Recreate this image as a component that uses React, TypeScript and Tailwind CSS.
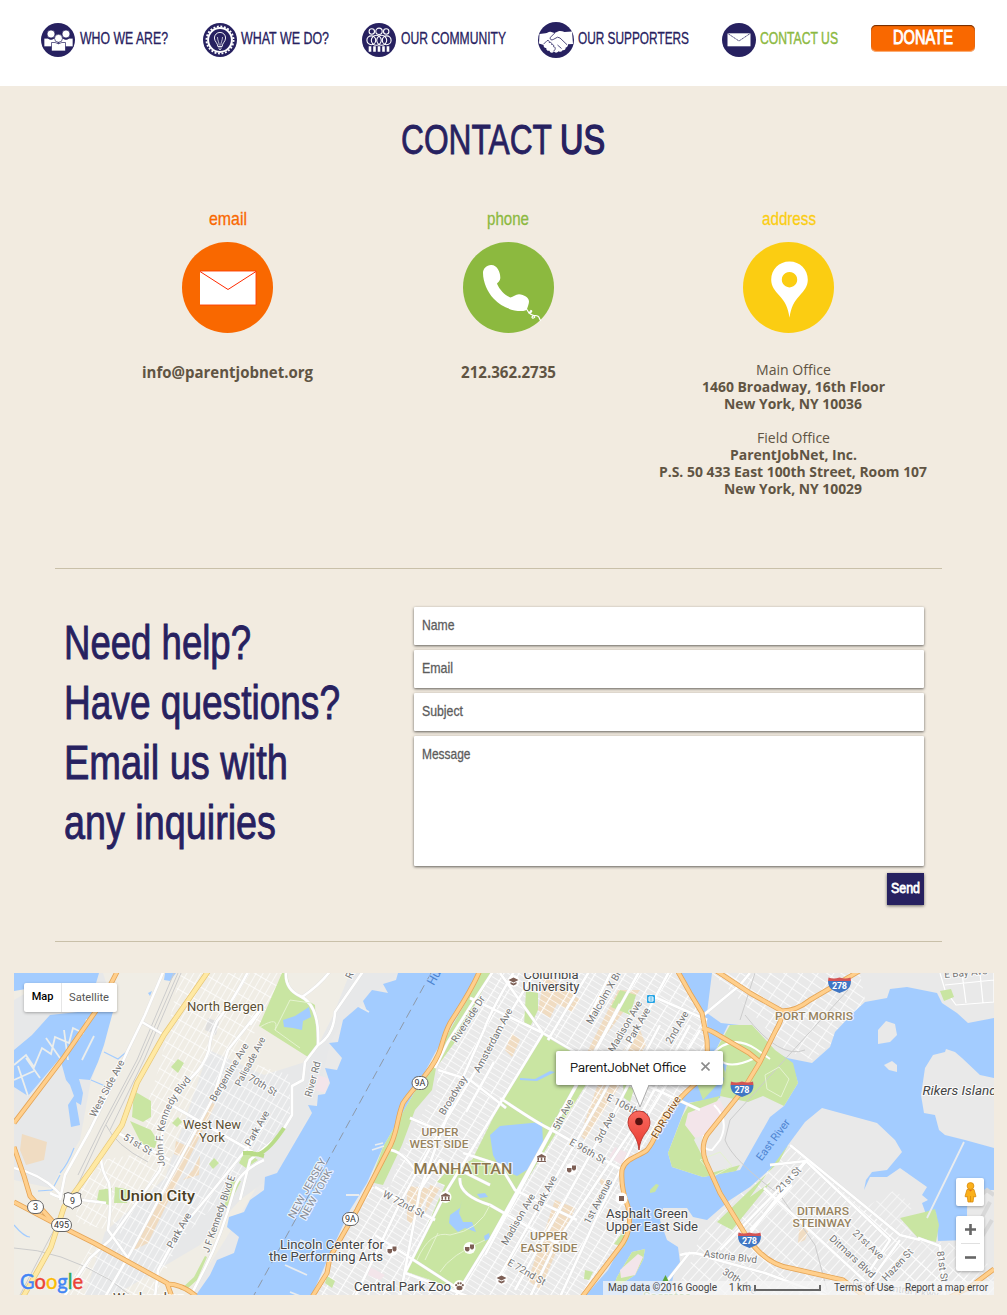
import { useLayoutEffect, useRef, useState } from "react";
import type { ReactNode } from "react";

/** Sets a line of text to an exact width by scaling it horizontally. */
function Fit({ w, className = "", children }: { w: number; className?: string; children: ReactNode }) {
  const ref = useRef<HTMLSpanElement>(null);
  const [k, setK] = useState(1);
  useLayoutEffect(() => {
    if (ref.current && ref.current.offsetWidth) {
      const prev = ref.current.style.transform;
      ref.current.style.transform = "none";
      const natural = ref.current.getBoundingClientRect().width;
      ref.current.style.transform = prev;
      setK(w / natural);
    }
  }, [w]);
  return (
    <span className="block" style={{ width: w }}>
      <span ref={ref} className={"block w-max origin-left whitespace-nowrap " + className} style={{ transform: `scaleX(${k})` }}>
        {children}
      </span>
    </span>
  );
}

const NAVY = "#272160";

function PeopleIcon() {
  const person = (x: number, y: number) => (
    <g fill="#fff" stroke={NAVY} strokeWidth=".7">
      <path d={`M${x - 7} ${y + 4.2}h3.6q3.4 2.6 6.800 0h3.600v8.500h-14z`} />
      <circle cx={x} cy={y} r="4" />
    </g>
  );
  return (
    <svg className="block size-[34px]" viewBox="0 0 34 34">
      <circle cx="17" cy="17" r="17" fill={NAVY} />
      {person(10, 11)}
      {person(25, 11)}
      {person(17.500, 15.300)}
    </svg>
  );
}

function BulbIcon() {
  return (
    <svg className="block size-[34px]" viewBox="0 0 34 34" fill="none">
      <circle cx="17" cy="17" r="17" fill={NAVY} />
      <circle cx="17" cy="17" r="11.900" stroke="#fff" strokeWidth="2" />
      <circle cx="17" cy="17" r="13.500" stroke="#fff" strokeWidth="1.900" strokeDasharray="1.9 1.634" />
      <path d="M14.800 23.500c0-3.500-3.400-5-3.400-8.500a5.600 5.600 0 0 1 11.200 0c0 3.500-3.400 5-3.400 8.500z" stroke="#fff" strokeWidth=".9" />
      <path d="M16.200 22.500c0-3-1.700-5-1.700-8.500M17.800 22.500c0-3 1.700-5 1.700-8.500M15 25h4M16 26.500h2" stroke="#fff" strokeWidth=".7" />
    </svg>
  );
}

function CommunityIcon() {
  return (
    <svg className="block size-[34px]" viewBox="0 0 34 34" fill="none" stroke="#fff" strokeWidth="1.100">
      <circle cx="17" cy="17" r="17" fill={NAVY} stroke="none" />
      <circle cx="9.800" cy="8.500" r="2.700" />
      <circle cx="17" cy="8.300" r="3.200" />
      <circle cx="24.200" cy="8.500" r="2.700" />
      <circle cx="9.300" cy="17.300" r="4.400" />
      <circle cx="14.300" cy="17.300" r="5" />
      <circle cx="19.700" cy="17.300" r="5" />
      <circle cx="24.700" cy="17.300" r="4.400" />
      <path d="M8 23.300v5.400M12.500 23.300v5.400M17 23.300v5.400M21.500 23.300v5.400M26 23.300v5.400" strokeWidth="2.600" />
    </svg>
  );
}

function HandshakeIcon() {
  return (
    <svg className="block size-[36px]" viewBox="0 0 36 36">
      <circle cx="18" cy="18" r="18" fill={NAVY} />
      <path
        d="M1.500 12l6-.8c2-.2 3-1.800 5-1.500l4 1.300 4-1.700c2-.7 4 .2 6 .8l7.500-.600 1 12.500-5 .2c0 2-.8 3-2.300 3.200 0 1.800-1 3-3 2.700-.5 1.800-2.500 2.200-4 1.100-1.500 1.700-3.500 2-4.700.3-1.500 1.800-4 1.500-4.500-.7-2.300.4-3.500-1-3.200-2.800-2 .2-3-1.500-2.700-3l-4.600-1.500z"
        fill="#fff"
      />
      <path
        d="M17 10.800l-4.800 4.700c-.6 2.300 1.600 3 3 2l4.300-2.300 2.500.8 7 6.700M5.500 22.200l3.500-3.500c1.500-.8 2.800.5 2.200 1.800 1.700-.6 3 .6 2.400 2 1.800-.2 2.600 1 2 2.300 1.400 0 2 1.200 1.400 2.700l-1.500 1.800M19.500 23l4 3.500"
        fill="none"
        stroke={NAVY}
        strokeWidth=".8"
      />
    </svg>
  );
}

function MailIcon() {
  return (
    <svg className="block size-[34px]" viewBox="0 0 34 34">
      <circle cx="17" cy="17" r="17" fill={NAVY} />
      <rect x="5.500" y="10.300" width="23" height="13" fill="#fff" />
      <path d="M5.500 10.300L17 18l11.500-7.700" fill="none" stroke={NAVY} strokeWidth=".8" strokeDasharray="1.500 .4" />
    </svg>
  );
}

const NAV = [
  { label: "WHO WE ARE?", w: 88, gap: "gap-[5px]", ml: "ml-[41px]", icon: <PeopleIcon /> },
  { label: "WHAT WE DO?", w: 88, gap: "gap-[4px]", ml: "ml-[35px]", icon: <BulbIcon /> },
  { label: "OUR COMMUNITY", w: 105, gap: "gap-[5px]", ml: "ml-[33px]", icon: <CommunityIcon /> },
  { label: "OUR SUPPORTERS", w: 111, gap: "gap-[4px]", ml: "ml-[32px]", icon: <HandshakeIcon /> },
  { label: "CONTACT US", w: 78, gap: "gap-[4px]", ml: "ml-[33px]", icon: <MailIcon />, active: true },
];

function Nav() {
  return (
    <header className="flex h-[86px] bg-white">
      {NAV.map((n) => (
        <a key={n.label} className={"flex h-[80px] items-center " + n.gap + " " + n.ml}>
          {n.icon}
          <Fit
            w={n.w}
            className={
              "mt-[-3px] text-[16px] leading-4 " +
              (n.active ? "text-[#8cb941] [-webkit-text-stroke:0.4px_#8cb941]" : "text-[#272160] [-webkit-text-stroke:0.3px_#272160]")
            }
          >
            {n.label}
          </Fit>
        </a>
      ))}
      <a className="mt-[25px] ml-[33px] flex h-[27px] w-[104px] justify-center rounded-[5px] bg-[#f96800] pt-[2px] shadow-[inset_0_1px_1px_rgba(60,20,0,0.75),inset_0_-1px_1px_rgba(255,255,255,0.5)]">
        <Fit w={60} className="text-[19.5px] leading-[20px] text-white [-webkit-text-stroke:0.9px_white]">
          DONATE
        </Fit>
      </a>
    </header>
  );
}

function EnvelopeBadge() {
  return (
    <svg className="block size-[91px]" viewBox="0 0 91 91">
      <circle cx="45.500" cy="45.500" r="45.500" fill="#f96800" />
      <rect x="18" y="29" width="56" height="34" fill="#fff" />
      <path d="M18 29h56v34H18" fill="none" stroke="#ff3c00" strokeWidth=".9" />
      <path d="M18 29.500L46 47.500 74 29.500" fill="none" stroke="#ff2a00" strokeWidth="1" />
    </svg>
  );
}

function PhoneBadge() {
  return (
    <svg className="block size-[91px]" viewBox="0 0 91 91">
      <circle cx="45.500" cy="45.500" r="45.500" fill="#8cb93f" />
      <path
        d="M28 23c-4.500.2-8 3.500-8 8 0 9 4.500 19 10.500 25.500 7.500 8 18 12.500 27.500 12.500 3.500 0 5.500-.5 6-2 .7-2 2-5.500 2-7.500 0-4-5-7-10-7.300-3.500 0-5.800 2.700-8.500 3.300-6-2.500-11-8-13.500-13.800 1.200-1.700 3.300-2.700 3.300-6.200C37.300 30 34 22.700 28 23z"
        fill="#fff"
      />
      <path d="M63.500 67l2.500 4 2-2.500c1.500.3.500 2-1.500 2.700 1.500 2 4 1.500 5 2.800 1.500 2-3 3-2.500 1 .5-1.500 4-2 6-.8 2 1.500 1 3 3 4.500" fill="none" stroke="#fff" strokeWidth="1.200" />
    </svg>
  );
}

function PinBadge() {
  return (
    <svg className="block size-[91px]" viewBox="0 0 91 91">
      <circle cx="45.500" cy="45.500" r="45.500" fill="#fbcd12" />
      <path
        fillRule="evenodd"
        d="M46.500 19.500c10.500 0 18.300 8 18.300 18.200 0 6.500-3.500 10.600-8.300 16-5.500 6-8.500 11.500-10 22-1.500-10.500-4.500-16-10-22-4.800-5.400-8.300-9.500-8.300-16 0-10.200 7.800-18.200 18.300-18.200zM46.500 30a7.700 7.700 0 1 0 .01 0z"
        fill="#fff"
      />
    </svg>
  );
}

const ADDRESS: [string, number, boolean][] = [
  ["Main Office", 75, false],
  ["1460 Broadway, 16th Floor", 183, true],
  ["New York, NY 10036", 138, true],
  ["", 0, false],
  ["Field Office", 73, false],
  ["ParentJobNet, Inc.", 127, true],
  ["P.S. 50 433 East 100th Street, Room 107", 268, true],
  ["New York, NY 10029", 138, true],
];

function Contacts() {
  const bold = "text-[15.5px] leading-5 font-bold font-['Open_Sans',sans-serif]";
  return (
    <section className="ml-[87px] flex h-[361px] text-[#605443]">
      <div className="flex w-[281px] flex-col items-center">
        <Fit w={38} className="text-[19px] leading-[23px] text-[#f96800] [-webkit-text-stroke:0.3px_#f96800]">email</Fit>
        <div className="mt-[12px]"><EnvelopeBadge /></div>
        <div className="mt-[29px]"><Fit w={171} className={bold}>info@parentjobnet.org</Fit></div>
      </div>
      <div className="flex w-[280px] flex-col items-center">
        <Fit w={42} className="text-[19px] leading-[23px] text-[#8cb93f] [-webkit-text-stroke:0.3px_#8cb93f]">phone</Fit>
        <div className="mt-[12px]"><PhoneBadge /></div>
        <div className="mt-[29px]"><Fit w={95} className={bold}>212.362.2735</Fit></div>
      </div>
      <div className="flex w-[290px] flex-col items-center">
        <div className="flex flex-col items-center pr-[9px]">
          <Fit w={54} className="text-[19px] leading-[23px] text-[#fbcd12] [-webkit-text-stroke:0.3px_#fbcd12]">address</Fit>
          <div className="mt-[12px]"><PinBadge /></div>
        </div>
        <div className="mt-[28px] flex flex-col items-center font-['Open_Sans',sans-serif] text-[14px]">
          {ADDRESS.map(([t, w, b], i) =>
            t ? (
              <div key={i} className="h-[17px]">
                <Fit w={w} className={"leading-[17px] " + (b ? "font-bold" : "")}>{t}</Fit>
              </div>
            ) : (
              <div key={i} className="h-[17px]" />
            ),
          )}
        </div>
      </div>
    </section>
  );
}

function Field({ label, w, tall = false }: { label: string; w: number; tall?: boolean }) {
  return (
    <div className={"rounded-[1px] bg-white pt-[9px] pl-[7.5px] shadow-[0_1px_3px_rgba(0,0,0,0.6)] " + (tall ? "h-[130px]" : "h-[38px]")}>
      <Fit w={w} className="text-[15px] leading-[18px] text-[#5c5c5c] [-webkit-text-stroke:0.3px_#5c5c5c]">{label}</Fit>
    </div>
  );
}

function Inquiry() {
  return (
    <section className="ml-[55px] flex h-[374px] w-[887px] border-y border-[#c9c0a9]">
      <div className="mt-[44px] ml-[9px] w-[350px] text-[47.5px] leading-[60px] text-[#272160]">
        {([["Need help?", 187], ["Have questions?", 276], ["Email us with", 224], ["any inquiries", 212]] as [string, number][]).map(([t, w]) => (
          <div key={t} className="h-[60px]">
            <Fit w={w} className="[-webkit-text-stroke:0.9px_#272160]">{t}</Fit>
          </div>
        ))}
      </div>
      <form className="mt-[38px] flex w-[510px] flex-col gap-[5px]">
        <Field label="Name" w={32.5} />
        <Field label="Email" w={31} />
        <Field label="Subject" w={41} />
        <Field label="Message" w={48.5} tall />
        <button type="button" className="mt-[2px] flex h-[32px] w-[37px] items-start justify-center self-end bg-[#272160] pt-[6px] shadow-[0_1px_3px_rgba(0,0,0,0.55)]">
          <Fit w={29} className="text-[15px] leading-[18px] text-white [-webkit-text-stroke:0.8px_white]">Send</Fit>
        </button>
      </form>
    </section>
  );
}

type LabelSpec = { t: string; x: number; y: number; r?: number; s?: number; c?: string; wt?: number; w?: number; i?: boolean; a?: "start" | "middle" };

const LABELS: LabelSpec[] = [
  { t: "North Bergen", x: 225.500, y: 1011, s: 13, w: 77, c: "#5c5035" },
  { t: "West New", x: 212, y: 1129, s: 12.800, w: 58, c: "#5c5035" },
  { t: "York", x: 212, y: 1142, s: 12.800, w: 26, c: "#5c5035" },
  { t: "Union City", x: 157.500, y: 1201, s: 14.500, w: 75, c: "#4b3f24", wt: 500 },
  { t: "Weehawken", x: 149, y: 1302, s: 12.500, w: 72, c: "#5c5035" },
  { t: "West Side Ave", x: 110, y: 1090, r: -62 },
  { t: "Bergenline Ave", x: 232, y: 1074, r: -59 },
  { t: "Palisade Ave", x: 253, y: 1063, r: -62, s: 9.500 },
  { t: "70th St", x: 261, y: 1088, r: 31 },
  { t: "51st St", x: 136, y: 1147, r: 31 },
  { t: "Park Ave", x: 260, y: 1130, r: -60 },
  { t: "Park Ave", x: 182, y: 1232, r: -60 },
  { t: "River Rd", x: 316, y: 1080, r: -75 },
  { t: "River Rd", x: 359, y: 963, r: -65 },
  { t: "J F Kennedy Blvd E", x: 222, y: 1215, r: -71, w: 81 },
  { t: "NEW JERSEY", x: 310, y: 1190, r: -61, c: "#8b8f98", w: 67 },
  { t: "NEW YORK", x: 319, y: 1196, r: -61, c: "#8b8f98", w: 56 },
  { t: "Hudson River", x: 451, y: 955, r: -61, s: 12, c: "#4c83d0" },
  { t: "Riverside Dr", x: 471, y: 1021, r: -57 },
  { t: "Amsterdam Ave", x: 496, y: 1042, r: -62 },
  { t: "Broadway", x: 456, y: 1097, r: -58 },
  { t: "UPPER", x: 440, y: 1136, s: 11.500, w: 37, c: "#97835f", wt: 500 },
  { t: "WEST SIDE", x: 439, y: 1148, s: 11.500, w: 59, c: "#97835f", wt: 500 },
  { t: "MANHATTAN", x: 463, y: 1174, s: 14.500, w: 99, c: "#8c7750", wt: 500 },
  { t: "W 72nd St", x: 402, y: 1207, r: 28 },
  { t: "Lincoln Center for", x: 332, y: 1249, s: 13, w: 104, c: "#454545" },
  { t: "the Performing Arts", x: 326, y: 1261, s: 13, w: 114, c: "#454545" },
  { t: "Central Park Zoo", x: 402.500, y: 1291, s: 12.800, w: 97, c: "#454545" },
  { t: "Columbia", x: 551, y: 979, s: 12.800, w: 55, c: "#454545" },
  { t: "University", x: 551, y: 991, s: 12.800, w: 57, c: "#454545" },
  { t: "Malcolm X Blvd", x: 609, y: 995, r: -60 },
  { t: "Madison Ave", x: 628, y: 1028, r: -60 },
  { t: "Park Ave", x: 641, y: 1027, r: -60 },
  { t: "2nd Ave", x: 680, y: 1029, r: -60 },
  { t: "5th Ave", x: 566, y: 1116, r: -63 },
  { t: "3rd Ave", x: 608, y: 1129, r: -62 },
  { t: "E 106th St", x: 626, y: 1110, r: 27 },
  { t: "E 96th St", x: 586, y: 1154, r: 30 },
  { t: "1st Avenue", x: 601, y: 1203, r: -62 },
  { t: "Park Ave", x: 548, y: 1195, r: -62 },
  { t: "Madison Ave", x: 521, y: 1221, r: -60 },
  { t: "E 72nd St", x: 525, y: 1275, r: 30 },
  { t: "FDR Drive", x: 669, y: 1119, r: -59, c: "#7b4a12", s: 10.500, w: 47 },
  { t: "UPPER", x: 549, y: 1240, s: 11.500, w: 38, c: "#97835f", wt: 500 },
  { t: "EAST SIDE", x: 549, y: 1252, s: 11.500, w: 57, c: "#97835f", wt: 500 },
  { t: "Asphalt Green", x: 647, y: 1218, s: 12.800, w: 82, c: "#454545" },
  { t: "Upper East Side", x: 652, y: 1231, s: 12.800, w: 92, c: "#454545" },
  { t: "Astoria Blvd", x: 730, y: 1260, r: 7 },
  { t: "30th Ave", x: 738, y: 1284, r: 33 },
  { t: "PORT MORRIS", x: 814, y: 1020, s: 11.500, w: 78, c: "#97835f", wt: 500 },
  { t: "East River", x: 776, y: 1142, r: -53, s: 11, c: "#4c83d0" },
  { t: "Rikers Island", x: 959.500, y: 1095, s: 13, w: 74, c: "#454545", i: true },
  { t: "E Bay Ave", x: 966, y: 976, r: -5 },
  { t: "21st St", x: 791, y: 1182, r: -46 },
  { t: "DITMARS", x: 823, y: 1215, s: 11.500, w: 52, c: "#97835f", wt: 500 },
  { t: "STEINWAY", x: 822, y: 1227, s: 11.500, w: 59, c: "#97835f", wt: 500 },
  { t: "21st Ave", x: 866, y: 1247, r: 43 },
  { t: "Ditmars Blvd", x: 850, y: 1259, r: 43, w: 58 },
  { t: "Hazen St", x: 900, y: 1267, r: -47 },
  { t: "81st St", x: 939, y: 1267, r: 82 },
  { t: "Grand Central Pkwy", x: 895, y: 1292, r: 8 },
  { t: "Socrates", x: 667, y: 1300, s: 11.500, w: 48, c: "#689f38" },
];

function MapLabel({ t, x, y, r = 0, s = 10, c = "#757575", wt = 400, w, i, a = "middle" }: LabelSpec) {
  return (
    <text
      x={x}
      y={y}
      transform={`rotate(${r} ${x} ${y})`}
      fontSize={s}
      fontWeight={wt}
      fontStyle={i ? "italic" : "normal"}
      fill={c}
      textAnchor={a}
      textLength={w}
      lengthAdjust="spacingAndGlyphs"
      stroke={c === "#4c83d0" ? "#a3ccff" : "#ffffff"}
      strokeOpacity=".75"
      strokeWidth="2.200"
      strokeLinejoin="round"
      paintOrder="stroke"
    >
      {t}
    </text>
  );
}

const HIGHWAYS = [
  "M118 970L100 1005 64 1057 14 1123",
  "M14 1147L24 1176 30 1196 54 1223",
  "M14 1202L54 1223 94 1243 167 1283 172 1297",
  "M167 1284Q182 1284 196 1296",
  "M480 970C472 990 458 1010 450 1023C443 1036 442 1047 438 1055C430 1074 414 1086 403 1103C396 1120 398 1134 388 1150L357 1210 330 1257 327 1273 312 1297",
  "M582 1297L620 1247C630 1234 631 1222 628 1207C623 1194 621 1182 622 1170C625 1158 640 1156 647 1150C657 1138 655 1132 663 1120C675 1102 686 1092 697 1082C708 1070 708 1060 707 1040L702 1013 690 993 677 970",
  "M702 1028Q709 1029 720 1036L749 1053 760 1062",
  "M861 970L810 1000Q796 1011 782 1011L750 993 715 970",
  "M782 1011Q783 1018 776 1030L760 1062 743 1090 707 1135Q700 1147 706 1162L720 1193 747 1237Q765 1264 790 1268L843 1280 864 1296",
  "M994 1269L970 1287 950 1297",
];

const ROADS = [
  "M164 970L145 1015 128 1050 112 1085 90 1130 65 1175 60 1200",
  "M142 1022L164 1035M116 1132L170 1160",
  "M249 970Q232 1003 217 1021Q210 1036 209 1050Q204 1066 192 1077L172 1100Q160 1120 162 1160L160 1170 110 1240 90 1258 64 1297",
  "M264 1005L228 1050 213 1098 170 1178 132 1250 105 1297",
  "M264 1125L244 1152 210 1194 180 1230 158 1270 155 1297",
  "M173 1106L225 1136 260 1156M264 1160Q238 1172 234 1190Q222 1235 204 1270L190 1297",
  "M101 1157Q101 1170 109 1183Q112 1200 108 1230L128 1258M82 1200L106 1203M14 1168Q40 1174 56 1190Q68 1202 50 1193",
  "M286 973Q285 989 300 996Q320 1005 318 1045L305 1062 303 1080 292 1086 292 1115 280 1135 250 1160 240 1200",
  "M331 970Q320 985 302 997M364 970L335 1012Q334 1035 318 1045M264 1005L250 1025",
  "M494 970L470 1007 448 1042 435 1068M515 970Q490 1012 484 1030L455 1095 420 1190 400 1297",
  "M536 970L440 1130 400 1203 355 1297",
  "M438 1070L470 1080 506 1108M410 1118L450 1135M391 1150Q405 1153 418 1175",
  "M375 1187L435 1220M375 1235L460 1290M466 1112L494 1062",
  "M500 973L543 1033 447 1190 405 1273 470 1297",
  "M470 998L543 1033 577 1053 700 1110M590 970L548 1040",
  "M620 1004L590 1060 490 1240 455 1297",
  "M612 970L590 1015 M640 970L552 1130 485 1255M670 970L600 1100 500 1275M660 1025L615 1110 515 1290M690 1025L635 1125 555 1245 530 1297",
  "M650 995L707 1020M700 1030L648 1115 600 1210 560 1297",
  "M500 1098Q540 1125 552 1130L622 1170M463 1153L500 1165 515 1190 577 1220M460 1178Q458 1195 490 1205L560 1245",
  "M420 1190L440 1160 490 1185",
  "M700 1018L740 985 750 973M770 1165L806 1161 720 1250M750 1230L792 1185M790 1145L900 1235 920 1240",
  "M806 1161L890 1240 870 1270M764 1188L880 1295M806 1161L760 1220M792 1180L745 1240",
  "M900 1240L860 1295M918 1238L940 1246 945 1297M680 1255Q695 1250 710 1258L765 1273 830 1297M660 1290L690 1252",
];

const GREENS = [
  "287,973 290,990 315,1005 317,1045 308,1057 259,1026 282,973",
  "134,1091 151,1101 151,1117 143,1122 132,1117",
  "130,1121 151,1130 157,1140 155,1148 142,1145",
  "178,1059 184,1063 178,1073 171,1067",
  "99,1190 112,1188 111,1206 97,1200",
  "115,1187 130,1190 127,1203 114,1203",
  "178,1117 182,1122 177,1127 172,1123",
  "214,1158 219,1163 213,1169 209,1164",
  "245,1151 258,1160 246,1168 239,1163",
  "231,1181 241,1181 229,1205 224,1207",
  "205,1256 207,1257 197,1280 186,1290 180,1290 194,1277",
  "480,973 492,973 455,1042 436,1068 432,1090 415,1110 402,1145 383,1185 370,1182 383,1147 410,1100 437,1053 463,1007",
  "543,1033 580,1055 587,1083 490,1240 460,1290 407,1272 445,1185 437,1182 448,1170 472,1160 503,1098",
  "526,991 538,993 538,1010 530,1027 524,1025",
  "620,990 636,995 630,1015 611,1007",
  "623,1083 634,1089 630,1102 624,1098",
  "697,1084 723,1066 726,1075 703,1100",
  "752,1025 775,1050 793,1063 798,1083 784,1106 763,1096 748,1102 720,1096 727,1065 712,1057 730,1025",
  "690,1103 720,1096 694,1140 711,1173 740,1165 736,1171 703,1177 672,1167 668,1153 682,1117",
  "585,1270 593,1272 589,1280 584,1279",
  "788,1145 779,1162 717,1222 732,1230 771,1182 750,1197",
  "900,1218 925,1212 935,1209 939,1225 936,1242 918,1238",
  "940,991 951,989 954,997 944,1001",
  "327,1276 335,1281 332,1288 325,1283",
  "632,1252 645,1249 643,1260 635,1275 612,1290 617,1277",
  "622,1233 630,1235 624,1247 614,1244",
];

const TINTS = [
  "560,1107 575,1076 640,990 618,990",
  "22,1134 47,1142 44,1160 26,1165 20,1150",
  "210,1100 215,1105 148,1243 130,1252 150,1215 188,1150",
  "176,1141 191,1148 186,1158 174,1154",
  "193,1170 200,1155 199,1175 183,1180",
  "545,973 580,1000 572,1012 557,1004 550,1018 538,1010",
  "512,1033 520,1040 512,1057 505,1050",
  "555,1200 575,1208 540,1290 528,1280",
  "597,1176 610,1183 604,1190",
  "407,1186 430,1188 412,1225 407,1220",
  "424,1215 430,1185 440,1188",
  "600,1078 640,1030 646,1045 585,1140 580,1135",
  "799,1230 812,1222 805,1240 798,1243",
];

function Shield278({ x, y }: { x: number; y: number }) {
  return (
    <g transform={`translate(${x} ${y})`}>
      <path d="M-11.500-4H11.500Q11.500 3 6 5.500Q2 7 0 8Q-2 7-6 5.500Q-11.500 3-11.500-4Z" fill="#3f76c4" />
      <path d="M-11-7.500Q-6-5.500 0-7.500Q6-5.500 11-7.500L11.500-4H-11.500Z" fill="#d35455" />
      <text y="4" fontSize="9" fontWeight="700" fill="#fff" textAnchor="middle" textLength="15">278</text>
    </g>
  );
}

function Route({ x, y, t, w }: { x: number; y: number; t: string; w: number }) {
  return (
    <g>
      <rect x={x - w / 2} y={y - 6.500} width={w} height="13" rx="6.500" fill="#fff" stroke="#666" strokeWidth="1" />
      <text x={x} y={y + 3.200} fontSize="9" fill="#333" textAnchor="middle">{t}</text>
    </g>
  );
}

function Poi({ x, y, kind }: { x: number; y: number; kind: string }) {
  return (
    <g transform={`translate(${x} ${y})`} fill="#7d5f55" stroke="none">
      <circle r="6" fill="#fff" fillOpacity=".95" />
      {kind === "museum" && <path d="M-4.500-1.500L0-4 4.500-1.500V-.500H-4.500ZM-4-0.300h1.500v3H-4zM-.700-.300h1.500v3H-.700zM2.500-.300H4v3H2.500zM-4.500 3h9v1h-9z" />}
      {kind === "masks" && <path d="M-4.500-1h4.500v3q-2 3-4.500 0zM0.500-3.500h4v3.500q-2 3-4 0z" />}
      {kind === "school" && <path d="M-5-1L0-3.500 5-1 0 1.500zM-3 1l3 1.500L3 1v2L0 4.500-3 3z" />}
      {kind === "square" && <rect x="-2.500" y="-2.500" width="5" height="5" />}
      {kind === "paw" && (
        <>
          <ellipse cy="2" rx="3" ry="2.200" />
          <circle cx="-3.300" cy="-.8" r="1.100" />
          <circle cx="-1.200" cy="-2.700" r="1.100" />
          <circle cx="1.200" cy="-2.700" r="1.100" />
          <circle cx="3.300" cy="-.8" r="1.100" />
        </>
      )}
    </g>
  );
}

function CityMap() {
  return (
    <svg className="block h-[322px] w-[980px]" viewBox="14 973 980 322" fontFamily="Roboto, sans-serif">
      <defs>
        <pattern id="gm" width="13" height="5.500" patternUnits="userSpaceOnUse" patternTransform="translate(543 1033) rotate(31.5)">
          <path d="M0 0H13" stroke="#fff" strokeWidth="1.300" />
          <path d="M0 0V5.500" stroke="#fff" strokeWidth="2.200" />
        </pattern>
        <pattern id="gn" width="6" height="13" patternUnits="userSpaceOnUse" patternTransform="rotate(30)">
          <path d="M0 0V13M0 0H6" stroke="#fff" strokeWidth="1.300" />
        </pattern>
        <pattern id="gq" width="17" height="7" patternUnits="userSpaceOnUse" patternTransform="translate(806 1161) rotate(-48)">
          <path d="M0 0V7M0 0H17" stroke="#fff" strokeWidth="1.600" />
        </pattern>
        <pattern id="gb" width="13" height="8" patternUnits="userSpaceOnUse" patternTransform="rotate(34)">
          <path d="M0 0V8M0 0H13" stroke="#fff" strokeWidth="1.500" />
        </pattern>
        <linearGradient id="pin" x1="0" y1="0" x2="0" y2="1">
          <stop offset="0" stopColor="#f9695f" />
          <stop offset="1" stopColor="#e8392f" />
        </linearGradient>
      </defs>

      <rect x="14" y="973" width="980" height="322" fill="#e9e9e9" />
      <path d="M14 973H350L335 1010 305 1110 270 1165 225 1240 190 1295H14Z" fill="#f0ede5" />
      <path d="M14 1000L60 973 103 973 114 1008 90 1085 80 1140 50 1188 14 1180ZM209 1050L264 1075 305 1062 312 1113 240 1200 200 1245 115 1295 85 1295 105 1232 165 1178Z" fill="#e7e8e9" />
      <path d="M350 973H398L343 1020 330 1043 318 1097 277 1173 240 1200 292 1115 305 1062 318 1045 335 1012Z" fill="#e7e8e9" />
      <path d="M208 1018L219 1022 216 1035 205 1030Z" fill="#dedede" />
      <g fill="#f0dcc2">
        {TINTS.map((p) => <polygon key={p} points={p} />)}
      </g>
      <path d="M180 973H283L259 1026 213 1098 160 1170 142 1120 160 1065ZM101 1160L165 1150 185 1175 130 1250 100 1200ZM82 1180L101 1165 108 1230 75 1222ZM209 1050L290 1075 290 1115 230 1190 180 1240 160 1283 105 1255 165 1178ZM92 1245L160 1285 155 1297H62Z" fill="url(#gn)" />
      <path d="M493 973H677L702 1013 707 1045 697 1082 663 1115 640 1155 622 1170 628 1230 582 1297H314L340 1250 372 1187 390 1187 405 1145 436 1090 440 1060Z" fill="url(#gm)" />
      <path d="M712 973H860L865 1000 830 1045 812 1060 785 1050 745 1005Z" fill="url(#gb)" />
      <path d="M788 1145L925 1260 994 1285V1297H672L692 1260 700 1235Z" fill="url(#gq)" />
      <path d="M857 1212L895 1190 914 1207 900 1218 918 1240 968 1245 994 1270V1297H880Z" fill="url(#gq)" opacity=".7" />
      <path d="M940 973L945 990 956 1005 994 1002V973M945 985L994 980M962 973L966 1003M980 973L983 1003" fill="none" stroke="#fff" strokeWidth="1.200" />
      <g fill="#f3e5ea">
        <polygon points="318,1075 330,1079 325,1093 315,1090" />
        <polygon points="615,1147 632,1155 622,1165 609,1157" />
        <polygon points="370,1267 385,1275 380,1280 368,1275" />
      </g>

      <g fill="#a3ccff">
        <path d="M14 973H99L94 990 50 985 14 991Z" />
        <path d="M14 1050L32 1035 50 1015 114 1008 108 1030 104 1045 98 1062 90 1080 79 1079 83 1093 81 1105 76 1102 80 1125 71 1127 68 1105 74 1096 70 1085 66 1080 60 1058 28 1096 14 1087Z" />
        <path d="M165 973L176 973 170 981 164 980ZM148 993l4-2-2 5z" />
        <path d="M398 973L396 980 383 984 388 993 372 990 363 1001 367 1011 358 1007 343 1020 338 1042 329 1043 342 1058 337 1070 325 1068 330 1083 325 1094 318 1095 317 1106 308 1105 312 1113 277 1173 265 1177 264 1190 250 1200 244 1212 229 1217 227 1227 239 1237 234 1253 217 1260 210 1275 196 1295H312L333 1247 350 1210 367 1183 383 1147 410 1100 435 1053 463 1007 481 973Z" />
        <path d="M680 973H712L707 1013 721 1023 748 1026 767 1048 787 1058 812 1063 830 1047 835 1032 853 1013 865 1002 887 998 890 989 907 987 937 993 942 1003 957 1013 968 1023 994 1018V1078V1190L968 1190 966 1240 938 1241 936 1212 927 1217 922 1203 928 1200 922 1195 927 1187 900 1168 887 1177 870 1177 864 1190 866 1180 872 1172 887 1170 902 1152 895 1140 877 1123 822 1108 805 1122 788 1145 778 1162 750 1187 730 1200 707 1220 693 1217 687 1208 663 1208 660 1220 667 1240 678 1247 680 1262 673 1277 670 1295H586L608 1270 628 1233 632 1217 623 1183 623 1167 645 1152 657 1133 677 1103 697 1083 709 1060 707 1020Z" />
      </g>
      <g fill="#e9e9e9">
        <path d="M753 1027L793 1067 798 1083 784 1106 770 1117 740 1170 703 1177 672 1167 668 1153 687 1103 720 1098 727 1065 715 1052 728 1025Z" />
        <path d="M994 1078L980 1075 962 1058 955 1052 946 1049 945 1052 933 1055 925 1068 921 1095 924 1113 935 1115 939 1130 945 1135 965 1140 994 1148Z" />
        <path d="M878 1044L878 1030 886 1021 895 1024 897 1035 890 1042ZM884 1065l8-4 5 4v7l-8-2z" />
        <path d="M632 1252L645 1249 643 1260 635 1275 612 1290 617 1277Z" />
      </g>
      <g fill="#c9e5a2">
        {GREENS.map((p) => <polygon key={p} points={p} />)}
        <path d="M650 1190l6-6 3 1-4 7-5 1z" />
      </g>
      <path d="M688 1113L720 1100 725 1110 706 1135 695 1138 685 1125ZM620 1270l18-16 5 3-8 18-14 3z" fill="#f3e5ea" />
      <g fill="#a3ccff">
        <path d="M283 1020L295 1016 309 1007 311 1017 303 1021 302 1030 293 1028 284 1027Z" />
        <path d="M490 1135L500 1126 542 1122 543 1142 530 1168 517 1176 500 1168 493 1155ZM450 1215L460 1208 462 1200 459 1213 463 1222 472 1222 476 1232 465 1228 458 1232 449 1223ZM484 1236l5-3 1 5-5 3zM477 1194l8-1 3 4-8 1zM520 1078l15 1 15-8 5 1-18 9-17-1z" />
      </g>
      <path d="M14 1065l12-10 8 12 8-19 9 6 4-17 14 6 4-15 10 5 4-14M28 1096l-10-30M40 1078l-14-20M60 1058l-14-20M78 1040l14-22M82 1060l12-24M68 1060l-4-30M14 1080l20-9" fill="none" stroke="#eceeec" strokeWidth="1.800" />
      <g fill="none" stroke="#a3ccff" strokeWidth="1.200">
        <path d="M91 1080l14 6M104 1052l14 7 12-10M14 1225q10 12 16 12M60 1175l-8 15-14 1M74 1148q-6 16-14 25" />
      </g>

      <g fill="none" stroke="#cccccc" strokeWidth="1">
        <path d="M178 973L140 1060 104 1128 80 1180 20 1295M174 973L137 1060 101 1128 78 1175M181 973L144 1060 110 1130M106 1125Q115 1145 148 1162" />
        <path d="M14 1248Q60 1250 110 1280L130 1295M755 973L740 1020M745 1015Q780 1060 805 1050M848 990L730 1120 725 1140Q732 1160 780 1195L815 1245 827 1290" />
      </g>
      <path d="M431 973L254 1295" stroke="#8e99a8" strokeWidth="1" strokeDasharray="9 5" fill="none" />

      <g fill="none" stroke="#dedede" strokeWidth="3.200" strokeLinejoin="round">
        {ROADS.map((d) => <path key={d} d={d} />)}
      </g>
      <g fill="none" stroke="#fff" strokeWidth="2.600" strokeLinejoin="round">
        {ROADS.map((d) => <path key={d} d={d} />)}
      </g>
      <path d="M264 1156L252 1153 243 1153M250 1153Q262 1161 284 1128" fill="none" stroke="#b9dc88" strokeWidth="4" />
      <g fill="none" stroke="#e5f3d0" strokeWidth="1">
        <path d="M260 1027Q280 1015 275 1030L300 1048M275 1030L290 1000 311 1003M417 1260Q430 1230 450 1235 480 1230 490 1205M440 1272Q450 1255 485 1240M438 1233L425 1260M765 1075l14-8 10 12-8 18-14-8zM700 1160l20-8 12 14-18 10z" />
      </g>
      <path d="M710 1057q20-25 46-8l14 10M720 1060q10 10 35-2M714 1105Q730 1120 720 1140L712 1150Q700 1150 704 1135" fill="none" stroke="#fff" strokeWidth="2" />
      <path d="M964 1142L927 1218M346 1195h13M300 1240l20 7M292 1250l18 8M285 1265l22 10M290 1292l10 4M375 1145l8-2M372 1150l12-4M360 1007l9 5" fill="none" stroke="#e9ecef" strokeWidth="1.800" />
      <path d="M968 1190H994V1245H966Z" fill="#e9e9e9" />
      <path d="M975 1200l12-10 7 5M970 1240l20-38M980 1240l12-20" fill="none" stroke="#d8d8d8" strokeWidth="4" />

      <path d="M209 970L164 1035 137 1083 122 1125 91 1170 64 1207 51 1247 23 1297" fill="none" stroke="#e8c877" strokeWidth="5.500" />
      <path d="M209 970L164 1035 137 1083 122 1125 91 1170 64 1207 51 1247 23 1297" fill="none" stroke="#ffe9a3" strokeWidth="4" />
      <g fill="none" stroke="#e5a557" strokeWidth="5" strokeLinejoin="round">
        {HIGHWAYS.map((d) => <path key={d} d={d} />)}
      </g>
      <g fill="none" stroke="#ffcf8c" strokeWidth="3.400" strokeLinejoin="round">
        {HIGHWAYS.map((d) => <path key={d} d={d} />)}
      </g>

      {LABELS.map((l) => <MapLabel key={l.t + l.x} {...l} />)}
      <path id="jfk" d="M165 1166C160 1135 162 1112 193 1078" fill="none" />
      <text fontSize="10" fill="#757575" stroke="#fff" strokeOpacity=".75" strokeWidth="2.200" paintOrder="stroke">
        <textPath href="#jfk">John F. Kennedy Blvd</textPath>
      </text>

      <Shield278 x={839.500} y={985} />
      <Shield278 x={742} y={1089} />
      <Shield278 x={749.500} y={1240} />
      <Route x={420} y={1083} t="9A" w={16} />
      <Route x={350.500} y={1219} t="9A" w={16} />
      <Route x={35.500} y={1207} t="3" w={16} />
      <Route x={61.500} y={1225} t="495" w={20} />
      <path d="M64 1194l4-1.500 4.500 1.500 4.500-1.500 4 1.500c-2 3 2 6 0 10-2 3-6 2-8.500 5-2.500-3-6.500-2-8.500-5-2-4 2-7 0-10z" fill="#fff" stroke="#666" />
      <text x="72.500" y="1204" fontSize="9" fill="#333" textAnchor="middle">9</text>
      <Poi x={445.500} y={1197} kind="museum" />
      <Poi x={541.500} y={1158} kind="museum" />
      <Poi x={571.500} y={1169} kind="masks" />
      <Poi x={392} y={1250} kind="masks" />
      <Poi x={469.500} y={1248} kind="masks" />
      <Poi x={459.500} y={1286} kind="paw" />
      <Poi x={513.500} y={981} kind="school" />
      <Poi x={501.500} y={1279} kind="school" />
      <Poi x={621.500} y={1198.500} kind="square" />
      <rect x="647" y="995" width="8" height="8" rx="1" fill="#27a5e5" />
      <path d="M649 997h4v4h-4zM649 999h4" fill="none" stroke="#fff" strokeWidth="1" />
      <path d="M665.500 1275l-3 6h6z" fill="#5ba53c" />

      <path d="M639 1150c-1-9-4-14-8-19-2-3-3-6-3-9a11 11 0 0 1 22 0c0 3-1 6-3 9-4 5-7 10-8 19z" fill="url(#pin)" stroke="#b0281f" strokeWidth=".8" />
      <circle cx="639" cy="1121.500" r="3.800" fill="#5a1210" />
    </svg>
  );
}

function MapPanel() {
  return (
    <section className="relative mt-[31px] ml-[14px] h-[322px] w-[980px] overflow-hidden font-['Roboto',sans-serif]">
      <CityMap />

      <div className="absolute top-[10px] left-[10px] flex h-[29px] w-[93px] items-center rounded-[2px] bg-white text-[11px] shadow-[0_1px_3px_rgba(0,0,0,0.3)]">
        <div className="flex h-full w-[38px] items-center justify-center border-r border-[#e6e6e6] font-medium text-black">Map</div>
        <div className="flex flex-1 justify-center pt-px pr-px text-[#565656]"><Fit w={40}>Satellite</Fit></div>
      </div>

      <div className="absolute top-[78px] left-[542px] flex h-[34px] w-[167px] items-center rounded-[2px] bg-white pb-[3px] pl-[14px] shadow-[0_1px_4px_rgba(0,0,0,0.55)]">
        <Fit w={116} className="text-[13.5px] leading-4 font-light text-black [-webkit-text-stroke:0.2px_black]">ParentJobNet Office</Fit>
        <svg className="ml-[15px] size-[9px]" viewBox="0 0 9 9">
          <path d="M.5.500l8 8M8.500.500l-8 8" stroke="#8c8c8c" strokeWidth="1.600" />
        </svg>
      </div>
      <svg className="absolute top-[111px] left-[615px] h-[25px] w-[22px]" viewBox="0 0 22 25">
        <path d="M2 0L11 23 20 0Z" fill="#fff" />
        <path d="M2 1L11 23 20 1" fill="none" stroke="#999" strokeWidth=".8" />
      </svg>

      <div className="absolute top-[205px] left-[942px] flex size-[28px] items-center justify-center rounded-[2px] bg-white shadow-[0_1px_3px_rgba(0,0,0,0.3)]">
        <svg className="h-[21px] w-[13px]" viewBox="0 0 13 21">
          <path d="M3 7.500h7l2 7-1.500.5-.7-1L9 20H4l-.8-6-.7 1-1.500-.5z" fill="#fbb01b" stroke="#d98b0b" strokeWidth=".8" />
          <path d="M6.500 14v6" stroke="#d98b0b" strokeWidth=".8" />
          <circle cx="6.500" cy="4" r="3.400" fill="#fbb01b" stroke="#d98b0b" strokeWidth=".8" />
          <path d="M4.800 8h3.400L6.500 9.500z" fill="#e06c1f" />
        </svg>
      </div>
      <div className="absolute top-[243px] left-[942px] flex h-[55px] w-[28px] flex-col items-center rounded-[2px] bg-white shadow-[0_1px_3px_rgba(0,0,0,0.3)]">
        <svg className="my-[8px] size-[11px]" viewBox="0 0 11 11">
          <path d="M5.500 0v11M0 5.500h11" stroke="#666" strokeWidth="2.600" />
        </svg>
        <div className="h-px w-[19px] bg-[#e0e0e0]" />
        <svg className="my-[8px] size-[11px]" viewBox="0 0 11 11">
          <path d="M0 5.500h11" stroke="#666" strokeWidth="2.600" />
        </svg>
      </div>

      <div className="absolute bottom-[-1px] left-[6px] font-['Lato',sans-serif] text-[22px] leading-[30px] [text-shadow:0_0_2px_white]">
        <Fit w={63}>
          <span className="text-[#4285f4] [-webkit-text-stroke:0.5px_#4285f4]">G</span>
          <span className="text-[#ea4335] [-webkit-text-stroke:0.5px_#ea4335]">o</span>
          <span className="text-[#fbbc05] [-webkit-text-stroke:0.5px_#fbbc05]">o</span>
          <span className="text-[#4285f4] [-webkit-text-stroke:0.5px_#4285f4]">g</span>
          <span className="text-[#34a853] [-webkit-text-stroke:0.5px_#34a853]">l</span>
          <span className="text-[#ea4335] [-webkit-text-stroke:0.5px_#ea4335]">e</span>
        </Fit>
      </div>

      <div className="absolute right-0 bottom-0 flex h-[14px] w-[391px] items-center bg-[#f5f5f5]/75 pl-[5px] text-[10px] leading-[14px] text-[#444]">
        <Fit w={109}>Map data ©2016 Google</Fit>
        <div className="ml-[12px]"><Fit w={22}>1 km</Fit></div>
        <div className="ml-[3px] h-[6px] w-[67px] border-x-2 border-b-2 border-[#666]" />
        <div className="ml-[13px]"><Fit w={60}>Terms of Use</Fit></div>
        <div className="ml-[11px]"><Fit w={83}>Report a map error</Fit></div>
      </div>
    </section>
  );
}

export default function App() {
  return (
    <div className="h-[1315px] w-[1007px] overflow-hidden bg-[#f2ebe0] font-['Liberation_Sans',Arial,sans-serif]">
      <Nav />
      <h1 className="flex h-[121px] gap-[8px] pt-[28px] pl-[401px] text-[43px] leading-[50px] text-[#272160]">
        <Fit w={151} className="[-webkit-text-stroke:0.8px_#272160]">CONTACT</Fit>
        <Fit w={45} className="[-webkit-text-stroke:1.6px_#272160]">US</Fit>
      </h1>
      <Contacts />
      <Inquiry />
      <MapPanel />
    </div>
  );
}
